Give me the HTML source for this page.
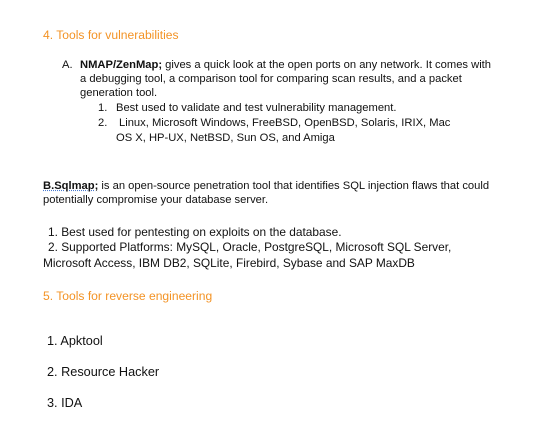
<!DOCTYPE html>
<html><head><style>
body{margin:0;width:533px;height:436px;background:#fff;position:relative;overflow:hidden;font-family:"Liberation Sans",Arial,sans-serif;color:#111;font-size:11.2px}
.l{position:absolute;white-space:nowrap;line-height:14px}
.o{color:#f39325;font-size:12.1px}
.b{font-size:11.9px}
.c{font-size:12.7px}
</style></head><body>
<div class="l o" style="left:43px;top:28px">4. Tools for vulnerabilities</div>
<div class="l" style="left:62px;top:58px">A.</div>
<div class="l" style="left:80px;top:58px"><b>NMAP/ZenMap;</b> gives a quick look at the open ports on any network. It comes with</div>
<div class="l" style="left:80px;top:72px">a debugging tool, a comparison tool for comparing scan results, and a packet</div>
<div class="l" style="left:80px;top:86px">generation tool.</div>
<div class="l" style="left:98px;top:101px">1.</div>
<div class="l" style="left:116px;top:101px">Best used to validate and test vulnerability management.</div>
<div class="l" style="left:98px;top:116px">2.</div>
<div class="l" style="left:119px;top:116px">Linux, Microsoft Windows, FreeBSD, OpenBSD, Solaris, IRIX, Mac</div>
<div class="l" style="left:116px;top:131px">OS X, HP-UX, NetBSD, Sun OS, and Amiga</div>
<div class="l" style="left:43px;top:179px"><b style="text-decoration:underline dotted #4a7bd0">B.Sqlmap;</b> is an open-source penetration tool that identifies SQL injection flaws that could</div>
<div class="l" style="left:43px;top:193px">potentially compromise your database server.</div>
<div class="l b" style="left:48px;top:225px">1. Best used for pentesting on exploits on the database.</div>
<div class="l b" style="left:48px;top:240px">2. Supported Platforms: MySQL, Oracle, PostgreSQL, Microsoft SQL Server,</div>
<div class="l b" style="left:43px;top:256px">Microsoft Access, IBM DB2, SQLite, Firebird, Sybase and SAP MaxDB</div>
<div class="l o" style="left:43px;top:289px">5. Tools for reverse engineering</div>
<div class="l c" style="left:47px;top:334px">1. Apktool</div>
<div class="l c" style="left:47px;top:365px">2. Resource Hacker</div>
<div class="l c" style="left:47px;top:396px">3. IDA</div>
</body></html>
